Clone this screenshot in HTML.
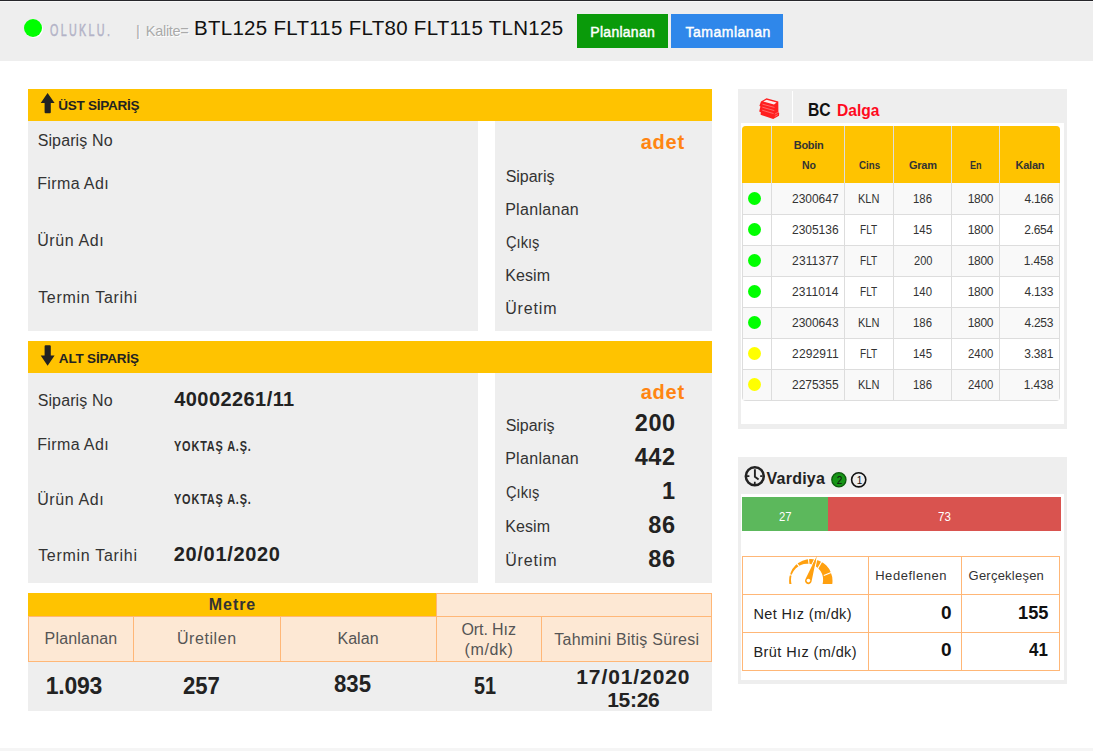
<!DOCTYPE html>
<html lang="tr">
<head>
<meta charset="utf-8">
<title>Panel</title>
<style>
html,body{margin:0;padding:0;}
body{width:1093px;height:751px;position:relative;overflow:hidden;background:#fff;font-family:"Liberation Sans","DejaVu Sans",sans-serif;color:#333;}
.a{position:absolute;white-space:nowrap;line-height:1;}
.b{position:absolute;}
.g{background:#eee;}
.y{background:#ffc300;}
.p{background:#fde8d4;}
.o{background:#ffb777;}
.d{background:#ddd;}
.dot{position:absolute;width:13px;height:13px;border-radius:50%;}
</style>
</head>
<body>
<!-- header -->
<div class="b g" style="left:0;top:0;width:1093px;height:60.5px"></div>
<div class="b" style="left:0;top:0;width:1093px;height:1px;background:#26262a"></div>
<div class="b" style="left:0;top:1px;width:1093px;height:1px;background:#f7f7f7"></div>
<div class="b" style="left:24px;top:18.5px;width:18px;height:18px;border-radius:50%;background:#00ff00;box-shadow:1px 1px 0 #fff"></div>
<div class="b" style="left:577px;top:14px;width:91px;height:34px;background:#0a9a0a"></div>
<div class="b" style="left:671px;top:14px;width:112px;height:34px;background:#2f87ea"></div>

<!-- UST -->
<div class="b y" style="left:28px;top:89px;width:684px;height:32px"></div>
<svg class="b" style="left:40px;top:92px" width="16" height="22" viewBox="0 0 16 22"><path d="M7.6 0.9 L14.6 11 L10.8 11 L10.8 20.3 Q10.8 21.3 9.8 21.3 L5.6 21.3 Q4.6 21.3 4.6 20.3 L4.6 11 L0.7 11 Z" fill="#222"/></svg>
<div class="b g" style="left:28px;top:121px;width:450px;height:209.5px"></div>
<div class="b g" style="left:495px;top:121px;width:217px;height:209.5px"></div>

<!-- ALT -->
<div class="b y" style="left:28px;top:341px;width:684px;height:32px"></div>
<svg class="b" style="left:40px;top:344px" width="16" height="22" viewBox="0 0 16 22"><path d="M7.6 21.7 L14.6 11.6 L10.8 11.6 L10.8 2.3 Q10.8 1.3 9.8 1.3 L5.6 1.3 Q4.6 1.3 4.6 2.3 L4.6 11.6 L0.7 11.6 Z" fill="#222"/></svg>
<div class="b g" style="left:28px;top:373px;width:450px;height:209.5px"></div>
<div class="b g" style="left:495px;top:373px;width:217px;height:209.5px"></div>

<!-- Metre -->
<div class="b y" style="left:28px;top:593px;width:408px;height:23px"></div>
<div class="b p" style="left:436px;top:593px;width:276px;height:24px;box-sizing:border-box;border:1px solid #ffb777"></div>
<div class="b p" style="left:28px;top:616px;width:684px;height:46px;box-sizing:border-box;border:1px solid #ffb777"></div>
<div class="b o" style="left:133px;top:616px;width:1px;height:46px"></div>
<div class="b o" style="left:280px;top:616px;width:1px;height:46px"></div>
<div class="b o" style="left:436px;top:616px;width:1px;height:46px"></div>
<div class="b o" style="left:541px;top:616px;width:1px;height:46px"></div>
<div class="b g" style="left:28px;top:662px;width:684px;height:49px"></div>

<!-- BC Dalga panel -->
<div class="b g" style="left:738px;top:89px;width:329px;height:340px"></div>
<div class="b" style="left:741px;top:123px;width:323px;height:301px;background:#fff"></div>
<div class="b" style="left:792px;top:91px;width:1px;height:32px;background:#fff"></div>
<svg class="b" style="left:758px;top:97px" width="23" height="23" viewBox="0 0 23 23"><path d="M3 4.5 L8.5 1.2 L20.3 4.6 L20.4 15.5 L21.2 16 L21 18.7 L15.2 22 L2.6 17.8 L2.8 15.2 L1.2 14.6 L2.4 9.5 L1.4 8.8 Z" fill="#ff1f1f"/><path d="M5.2 4.4 L8.6 2.8 L18.6 5.6 L16 7.4 Z" fill="#ffecec"/><path d="M4.5 7.2 L16.5 10.4 M4.3 10.2 L16.3 13.6 M4.2 13.2 L15.6 16.6 M16.8 17.2 L19.8 15.4 M16.8 19.4 L19.8 17.6" stroke="#ff8a8a" stroke-width=".7" fill="none"/></svg>
<!-- table -->
<div class="b" style="left:742px;top:126px;width:317.5px;height:274.5px;border-radius:4px;background:#ddd;overflow:hidden">
<div class="b y" style="left:0;top:0;width:318px;height:57px"></div>
<div class="b" style="left:1px;top:57px;width:315.5px;height:216.5px;background:#fff"></div>
<div class="b" style="left:1px;top:57px;width:315.5px;height:31px;background:#f9f9f9"></div>
<div class="b" style="left:1px;top:119px;width:315.5px;height:31px;background:#f9f9f9"></div>
<div class="b" style="left:1px;top:181px;width:315.5px;height:31px;background:#f9f9f9"></div>
<div class="b" style="left:1px;top:243px;width:315.5px;height:30.5px;background:#f9f9f9"></div>
<div class="b d" style="left:0;top:88px;width:318px;height:1px"></div>
<div class="b d" style="left:0;top:119px;width:318px;height:1px"></div>
<div class="b d" style="left:0;top:150px;width:318px;height:1px"></div>
<div class="b d" style="left:0;top:181px;width:318px;height:1px"></div>
<div class="b d" style="left:0;top:212px;width:318px;height:1px"></div>
<div class="b d" style="left:0;top:243px;width:318px;height:1px"></div>
<div class="b d" style="left:29px;top:0;width:1px;height:275px"></div>
<div class="b d" style="left:102px;top:0;width:1px;height:275px"></div>
<div class="b d" style="left:151px;top:0;width:1px;height:275px"></div>
<div class="b d" style="left:209px;top:0;width:1px;height:275px"></div>
<div class="b d" style="left:257px;top:0;width:1px;height:275px"></div>
</div>
<div class="dot" style="left:748px;top:192px;background:#00ff00"></div>
<div class="dot" style="left:748px;top:223px;background:#00ff00"></div>
<div class="dot" style="left:748px;top:254px;background:#00ff00"></div>
<div class="dot" style="left:748px;top:285px;background:#00ff00"></div>
<div class="dot" style="left:748px;top:316px;background:#00ff00"></div>
<div class="dot" style="left:748px;top:347px;background:#ffff00"></div>
<div class="dot" style="left:748px;top:378px;background:#ffff00"></div>

<!-- Vardiya panel -->
<div class="b g" style="left:738px;top:457px;width:329px;height:227px"></div>
<div class="b" style="left:741px;top:493.5px;width:323px;height:186px;background:#fff"></div>
<svg class="b" style="left:743px;top:464px" width="24" height="24" viewBox="0 0 24 24"><circle cx="11.8" cy="12.2" r="9" fill="none" stroke="#222" stroke-width="2.5"/><path d="M11.9 5.2 L11.9 12.7 L15.6 15.5" fill="none" stroke="#222" stroke-width="1.9"/><path d="M4 12.2h2.4M17.2 12.2h2.4M11.8 17.8v2.4" stroke="#222" stroke-width="1.7"/></svg>
<svg class="b" style="left:829px;top:470px" width="40" height="20" viewBox="0 0 40 20"><circle cx="9.9" cy="9.8" r="7.1" fill="#169616" stroke="#0c5c0c" stroke-width="1.3"/><circle cx="29.7" cy="9.8" r="7.1" fill="none" stroke="#111" stroke-width="1.6"/></svg>
<div class="b" style="left:742px;top:497px;width:86px;height:34px;background:#5cb85c"></div>
<div class="b" style="left:828px;top:497px;width:233px;height:34px;background:#d9534f"></div>
<div class="b" style="left:742px;top:556px;width:318px;height:115px;box-sizing:border-box;border:1px solid #ffb777"></div>
<div class="b o" style="left:742px;top:594px;width:318px;height:1px"></div>
<div class="b o" style="left:742px;top:632px;width:318px;height:1px"></div>
<div class="b o" style="left:868px;top:556px;width:1px;height:115px"></div>
<div class="b o" style="left:961px;top:556px;width:1px;height:115px"></div>
<svg class="b" style="left:786px;top:554px" width="50" height="32" viewBox="0 0 50 32">
<defs><clipPath id="gc"><rect x="0" y="0" width="50" height="29.9"/></clipPath></defs>
<g clip-path="url(#gc)">
<path fill="#ffa00f" fill-rule="evenodd" d="M3.1 26.7 a21.7 21.7 0 0 1 43.4 0 a21.7 21.7 0 0 1 -43.4 0 Z M5 25.85 a16.05 16.05 0 0 0 32.1 0 a16.05 16.05 0 0 0 -32.1 0 Z"/>
<g stroke="#fff" stroke-width="1.1">
<path d="M11.3 22.8 L3.1 20.5"/><path d="M16.0 15.8 L10.6 9.1"/><path d="M23.3 12.8 L22.4 4.2"/><path d="M31.8 14.6 L36.1 7.1"/><path d="M37.8 21.5 L45.8 18.2"/>
<path d="M29.57 3.24 L24.91 12.74"/><path d="M31.10 3.62 L29.13 13.12"/>
</g>
</g>
<path d="M30.8 2.1 L25.6 27.2 A3.3 3.3 0 1 1 19.4 25.3 Z" fill="#ffa00f"/>
<circle cx="22.4" cy="26.6" r="1.8" fill="#fff"/>
</svg>

<div class="b" style="left:0;top:748px;width:1093px;height:3px;background:#f5f5f5"></div>
<div class="a" style="left:50.11px;top:22px;font-size:16.5px;letter-spacing:3.600px;color:#b3b3c7;transform:scaleX(0.6500);transform-origin:0 0;-webkit-text-stroke:.5px #b3b3c7">OLUKLU.</div>
<div class="a" style="left:135.95px;top:24px;font-size:14.5px;color:#aaa;text-shadow:1px 1px 0 #fff">|</div>
<div class="a" style="left:145.75px;top:24px;font-size:14.5px;letter-spacing:-0.275px;color:#aaa;text-shadow:1px 1px 0 #fff">Kalite=</div>
<div class="a" style="left:193.95px;top:18px;font-size:20.5px;letter-spacing:0.284px;color:#111">BTL125 FLT115 FLT80 FLT115 TLN125</div>
<div class="a" style="left:590.35px;top:25px;font-size:14px;letter-spacing:0.269px;color:#fff;-webkit-text-stroke:.45px #fff">Planlanan</div>
<div class="a" style="left:685.55px;top:25px;font-size:14px;letter-spacing:0.500px;color:#fff;-webkit-text-stroke:.45px #fff">Tamamlanan</div>
<div class="a" style="left:58.35px;top:99px;font-size:13.5px;font-weight:bold;letter-spacing:-0.250px;color:#222">ÜST SİPARİŞ</div>
<div class="a" style="left:58.85px;top:352px;font-size:13.5px;font-weight:bold;letter-spacing:-0.185px;color:#222">ALT SİPARİŞ</div>
<div class="a" style="left:37.65px;top:133px;font-size:16px;letter-spacing:0.122px;color:#333">Sipariş No</div>
<div class="a" style="left:37.15px;top:176px;font-size:16px;letter-spacing:0.381px;color:#333">Firma Adı</div>
<div class="a" style="left:37.15px;top:233px;font-size:16px;letter-spacing:0.629px;color:#333">Ürün Adı</div>
<div class="a" style="left:38.15px;top:290px;font-size:16px;letter-spacing:0.708px;color:#333">Termin Tarihi</div>
<div class="a" style="left:640.70px;top:132px;font-size:20px;font-weight:bold;letter-spacing:0.783px;color:#ff8512">adet</div>
<div class="a" style="left:505.65px;top:169px;font-size:16px;letter-spacing:-0.017px;color:#333">Sipariş</div>
<div class="a" style="left:505.15px;top:202px;font-size:16px;letter-spacing:0.306px;color:#333">Planlanan</div>
<div class="a" style="left:505.71px;top:235px;font-size:16px;color:#333;transform:scaleX(0.9171);transform-origin:0 0">Çıkış</div>
<div class="a" style="left:505.15px;top:268px;font-size:16px;letter-spacing:0.112px;color:#333">Kesim</div>
<div class="a" style="left:505.15px;top:301px;font-size:16px;letter-spacing:0.870px;color:#333">Üretim</div>
<div class="a" style="left:37.65px;top:393px;font-size:16px;letter-spacing:0.122px;color:#333">Sipariş No</div>
<div class="a" style="left:37.15px;top:437px;font-size:16px;letter-spacing:0.381px;color:#333">Firma Adı</div>
<div class="a" style="left:37.15px;top:492px;font-size:16px;letter-spacing:0.629px;color:#333">Ürün Adı</div>
<div class="a" style="left:38.15px;top:548px;font-size:16px;letter-spacing:0.708px;color:#333">Termin Tarihi</div>
<div class="a" style="left:174.25px;top:389px;font-size:20px;font-weight:bold;letter-spacing:0.430px;color:#222">40002261/11</div>
<div class="a" style="left:174.31px;top:439px;font-size:14.5px;font-weight:bold;letter-spacing:1.100px;color:#2e2e2e;transform:scaleX(0.7533);transform-origin:0 0">YOKTAŞ A.Ş.</div>
<div class="a" style="left:174.31px;top:492px;font-size:14.5px;font-weight:bold;letter-spacing:1.100px;color:#2e2e2e;transform:scaleX(0.7533);transform-origin:0 0">YOKTAŞ A.Ş.</div>
<div class="a" style="left:173.75px;top:544px;font-size:20px;font-weight:bold;letter-spacing:0.678px;color:#222">20/01/2020</div>
<div class="a" style="left:640.70px;top:382px;font-size:20px;font-weight:bold;letter-spacing:0.783px;color:#ff8512">adet</div>
<div class="a" style="left:505.65px;top:418px;font-size:16px;letter-spacing:-0.017px;color:#333">Sipariş</div>
<div class="a" style="left:505.15px;top:451px;font-size:16px;letter-spacing:0.306px;color:#333">Planlanan</div>
<div class="a" style="left:505.71px;top:485px;font-size:16px;color:#333;transform:scaleX(0.9171);transform-origin:0 0">Çıkış</div>
<div class="a" style="left:505.15px;top:519px;font-size:16px;letter-spacing:0.112px;color:#333">Kesim</div>
<div class="a" style="left:505.15px;top:553px;font-size:16px;letter-spacing:0.870px;color:#333">Üretim</div>
<div class="a" style="left:634.85px;top:412px;font-size:23.5px;font-weight:bold;letter-spacing:0.500px;color:#222">200</div>
<div class="a" style="left:634.75px;top:446px;font-size:23.5px;font-weight:bold;letter-spacing:0.550px;color:#222">442</div>
<div class="a" style="left:662.00px;top:480px;font-size:23.5px;font-weight:bold;color:#222">1</div>
<div class="a" style="left:648.25px;top:514px;font-size:23.5px;font-weight:bold;letter-spacing:0.600px;color:#222">86</div>
<div class="a" style="left:648.25px;top:548px;font-size:23.5px;font-weight:bold;letter-spacing:0.600px;color:#222">86</div>
<div class="a" style="left:208.80px;top:597px;font-size:16px;font-weight:bold;letter-spacing:0.938px;color:#333">Metre</div>
<div class="a" style="left:44.55px;top:631px;font-size:16px;letter-spacing:0.194px;color:#555">Planlanan</div>
<div class="a" style="left:176.95px;top:631px;font-size:16px;letter-spacing:0.579px;color:#555">Üretilen</div>
<div class="a" style="left:337.45px;top:631px;font-size:16px;letter-spacing:0.050px;color:#555">Kalan</div>
<div class="a" style="left:461.45px;top:622px;font-size:16px;letter-spacing:-0.086px;color:#555">Ort. Hız</div>
<div class="a" style="left:464.50px;top:642px;font-size:16px;letter-spacing:0.610px;color:#555">(m/dk)</div>
<div class="a" style="left:554.25px;top:632px;font-size:16px;letter-spacing:0.271px;color:#555">Tahmini Bitiş Süresi</div>
<div class="a" style="left:45.70px;top:675px;font-size:23px;font-weight:bold;letter-spacing:-0.213px;color:#222">1.093</div>
<div class="a" style="left:183.08px;top:675px;font-size:23px;font-weight:bold;color:#222;transform:scaleX(0.9616);transform-origin:0 0">257</div>
<div class="a" style="left:333.68px;top:673px;font-size:23px;font-weight:bold;color:#222;transform:scaleX(0.9649);transform-origin:0 0">835</div>
<div class="a" style="left:473.75px;top:675px;font-size:23px;font-weight:bold;color:#222;transform:scaleX(0.8619);transform-origin:0 0">51</div>
<div class="a" style="left:576.25px;top:666px;font-size:21px;font-weight:bold;letter-spacing:0.911px;color:#222">17/01/2020</div>
<div class="a" style="left:607.25px;top:689px;font-size:21px;font-weight:bold;letter-spacing:-0.312px;color:#222">15:26</div>
<div class="a" style="left:808.44px;top:101px;font-size:18.5px;font-weight:bold;color:#111;transform:scaleX(0.8480);transform-origin:0 0">BC</div>
<div class="a" style="left:836.75px;top:102px;font-size:17px;font-weight:bold;color:#ff0a1e;transform:scaleX(0.9171);transform-origin:0 0">Dalga</div>
<div class="a" style="left:793.75px;top:140px;font-size:11px;font-weight:bold;letter-spacing:-0.312px;color:#333">Bobin</div>
<div class="a" style="left:801.68px;top:160px;font-size:11px;font-weight:bold;color:#333;transform:scaleX(0.9556);transform-origin:0 0">No</div>
<div class="a" style="left:859.06px;top:160px;font-size:11px;font-weight:bold;color:#333;transform:scaleX(0.8826);transform-origin:0 0">Cins</div>
<div class="a" style="left:909.00px;top:160px;font-size:11px;font-weight:bold;letter-spacing:-0.233px;color:#333">Gram</div>
<div class="a" style="left:970.18px;top:160px;font-size:11px;font-weight:bold;color:#333;transform:scaleX(0.8235);transform-origin:0 0">En</div>
<div class="a" style="left:1015.55px;top:160px;font-size:11px;font-weight:bold;letter-spacing:-0.250px;color:#333">Kalan</div>
<div class="a" style="left:792.10px;top:193px;font-size:12px;letter-spacing:-0.042px;color:#333">2300647</div>
<div class="a" style="left:858.28px;top:193px;font-size:12px;color:#333;transform:scaleX(0.9209);transform-origin:0 0">KLN</div>
<div class="a" style="left:913.25px;top:193px;font-size:12px;color:#333;transform:scaleX(0.9459);transform-origin:0 0">186</div>
<div class="a" style="left:967.70px;top:193px;font-size:12px;letter-spacing:-0.283px;color:#333">1800</div>
<div class="a" style="left:1024.55px;top:193px;font-size:12px;letter-spacing:-0.312px;color:#333">4.166</div>
<div class="a" style="left:792.10px;top:224px;font-size:12px;letter-spacing:-0.042px;color:#333">2305136</div>
<div class="a" style="left:860.26px;top:224px;font-size:12px;color:#333;transform:scaleX(0.8416);transform-origin:0 0">FLT</div>
<div class="a" style="left:913.25px;top:224px;font-size:12px;color:#333;transform:scaleX(0.9459);transform-origin:0 0">145</div>
<div class="a" style="left:967.70px;top:224px;font-size:12px;letter-spacing:-0.283px;color:#333">1800</div>
<div class="a" style="left:1024.30px;top:224px;font-size:12px;letter-spacing:-0.312px;color:#333">2.654</div>
<div class="a" style="left:792.10px;top:255px;font-size:12px;letter-spacing:0.125px;color:#333">2311377</div>
<div class="a" style="left:860.26px;top:255px;font-size:12px;color:#333;transform:scaleX(0.8416);transform-origin:0 0">FLT</div>
<div class="a" style="left:913.74px;top:255px;font-size:12px;color:#333;transform:scaleX(0.9211);transform-origin:0 0">200</div>
<div class="a" style="left:967.70px;top:255px;font-size:12px;letter-spacing:-0.283px;color:#333">1800</div>
<div class="a" style="left:1023.80px;top:255px;font-size:12px;letter-spacing:-0.125px;color:#333">1.458</div>
<div class="a" style="left:792.10px;top:286px;font-size:12px;letter-spacing:0.083px;color:#333">2311014</div>
<div class="a" style="left:860.26px;top:286px;font-size:12px;color:#333;transform:scaleX(0.8416);transform-origin:0 0">FLT</div>
<div class="a" style="left:913.25px;top:286px;font-size:12px;color:#333;transform:scaleX(0.9459);transform-origin:0 0">140</div>
<div class="a" style="left:967.70px;top:286px;font-size:12px;letter-spacing:-0.283px;color:#333">1800</div>
<div class="a" style="left:1024.55px;top:286px;font-size:12px;letter-spacing:-0.312px;color:#333">4.133</div>
<div class="a" style="left:792.10px;top:317px;font-size:12px;letter-spacing:-0.042px;color:#333">2300643</div>
<div class="a" style="left:858.28px;top:317px;font-size:12px;color:#333;transform:scaleX(0.9209);transform-origin:0 0">KLN</div>
<div class="a" style="left:913.25px;top:317px;font-size:12px;color:#333;transform:scaleX(0.9459);transform-origin:0 0">186</div>
<div class="a" style="left:967.70px;top:317px;font-size:12px;letter-spacing:-0.283px;color:#333">1800</div>
<div class="a" style="left:1024.55px;top:317px;font-size:12px;letter-spacing:-0.312px;color:#333">4.253</div>
<div class="a" style="left:792.10px;top:348px;font-size:12px;letter-spacing:0.125px;color:#333">2292911</div>
<div class="a" style="left:860.26px;top:348px;font-size:12px;color:#333;transform:scaleX(0.8416);transform-origin:0 0">FLT</div>
<div class="a" style="left:913.25px;top:348px;font-size:12px;color:#333;transform:scaleX(0.9459);transform-origin:0 0">145</div>
<div class="a" style="left:968.23px;top:348px;font-size:12px;color:#333;transform:scaleX(0.9476);transform-origin:0 0">2400</div>
<div class="a" style="left:1024.30px;top:348px;font-size:12px;letter-spacing:-0.250px;color:#333">3.381</div>
<div class="a" style="left:792.10px;top:379px;font-size:12px;letter-spacing:-0.042px;color:#333">2275355</div>
<div class="a" style="left:858.28px;top:379px;font-size:12px;color:#333;transform:scaleX(0.9209);transform-origin:0 0">KLN</div>
<div class="a" style="left:913.25px;top:379px;font-size:12px;color:#333;transform:scaleX(0.9459);transform-origin:0 0">186</div>
<div class="a" style="left:968.23px;top:379px;font-size:12px;color:#333;transform:scaleX(0.9476);transform-origin:0 0">2400</div>
<div class="a" style="left:1023.80px;top:379px;font-size:12px;letter-spacing:-0.125px;color:#333">1.438</div>
<div class="a" style="left:766.45px;top:471px;font-size:16px;font-weight:bold;letter-spacing:0.258px;color:#222">Vardiya</div>
<div class="a" style="left:836.80px;top:476px;font-size:10px;color:#111">2</div>
<div class="a" style="left:856.85px;top:476px;font-size:10px;color:#111">1</div>
<div class="a" style="left:778.93px;top:511px;font-size:12px;color:#fff;transform:scaleX(0.9388);transform-origin:0 0">27</div>
<div class="a" style="left:938.22px;top:511px;font-size:12px;color:#fff;transform:scaleX(0.9633);transform-origin:0 0">73</div>
<div class="a" style="left:875.20px;top:569px;font-size:13px;letter-spacing:0.539px;color:#333">Hedeflenen</div>
<div class="a" style="left:968.55px;top:569px;font-size:13px;letter-spacing:0.230px;color:#333">Gerçekleşen</div>
<div class="a" style="left:753.55px;top:607px;font-size:14.5px;letter-spacing:0.350px;color:#222">Net Hız (m/dk)</div>
<div class="a" style="left:753.55px;top:645px;font-size:14.5px;letter-spacing:0.396px;color:#222">Brüt Hız (m/dk)</div>
<div class="a" style="left:940.95px;top:603px;font-size:19px;font-weight:bold;color:#111">0</div>
<div class="a" style="left:1018.10px;top:603px;font-size:19px;font-weight:bold;color:#111;transform:scaleX(0.9600);transform-origin:0 0">155</div>
<div class="a" style="left:940.95px;top:640px;font-size:19px;font-weight:bold;color:#111">0</div>
<div class="a" style="left:1028.78px;top:640px;font-size:19px;font-weight:bold;color:#111;transform:scaleX(0.8938);transform-origin:0 0">41</div>
</body>
</html>
